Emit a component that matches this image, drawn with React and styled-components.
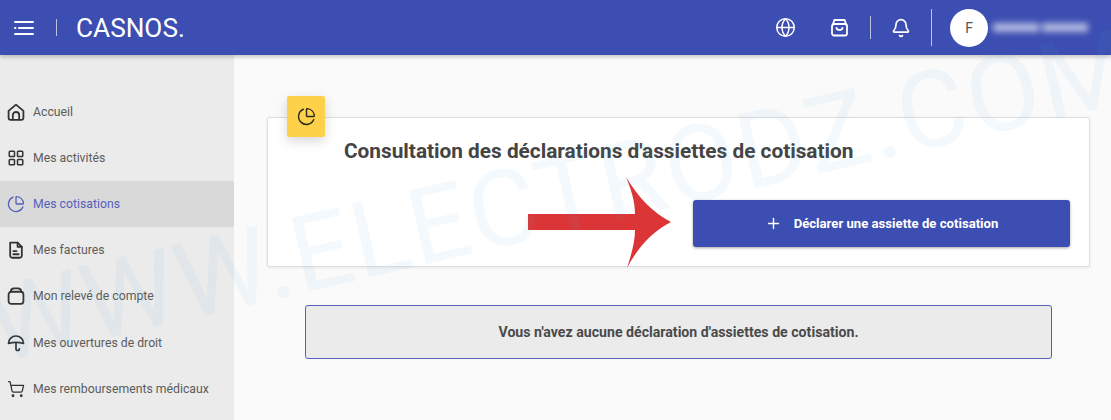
import React from "react";
import styled, { createGlobalStyle } from "styled-components";
import { ChartPie, Bell, Globe, LayoutGrid, Plus, ShoppingCart } from "lucide-react";

const GlobalStyle = createGlobalStyle`
  html, body { margin: 0; padding: 0; height: 100%; overflow: hidden; }
  body { font-family: Roboto, "Liberation Sans", sans-serif; background: #fafafa; }
  * { box-sizing: border-box; }
`;

const Page = styled.div`
  position: relative;
  height: 100vh;
  display: flex;
  flex-direction: column;
  overflow: hidden;
`;

const Header = styled.header`
  height: 55px;
  flex: none;
  display: flex;
  align-items: center;
  background: #3c4eb1;
  color: #fff;
  box-shadow: 0 2px 4px rgba(0, 0, 0, 0.22);
  position: relative;
  z-index: 1;
`;

const MenuButton = styled.div`
  width: 56px;
  display: flex;
  justify-content: center;
  padding-right: 8px;
`;

const Rule = styled.span`
  width: 1px;
  height: ${(p) => p.$h}px;
  background: rgba(255, 255, 255, 0.65);
  flex: none;
`;

const Brand = styled.div`
  margin-left: 19px;
  font-size: 26.2px;
  flex: 1;
`;

const HeaderIcon = styled.div`
  display: flex;
  width: ${(p) => p.$w}px;
  justify-content: center;
`;

const Avatar = styled.div`
  width: 38px;
  height: 38px;
  border-radius: 50%;
  background: #fff;
  color: #555;
  font-size: 14px;
  display: flex;
  align-items: center;
  justify-content: center;
  margin-left: 18px;
`;

const BlurredName = styled.div`
  display: flex;
  gap: 3px;
  margin-left: 5px;
  margin-right: 23px;
  filter: blur(3px);
`;

const NameBar = styled.span`
  width: ${(p) => p.$w}px;
  height: 9px;
  background: rgba(255, 255, 255, 0.6);
`;

const Body = styled.div`
  flex: 1;
  display: flex;
  min-height: 0;
`;

const Sidebar = styled.nav`
  width: 234px;
  flex: none;
  background: #ebebeb;
  padding-top: 33.5px;
`;

const NavItem = styled.div`
  height: 46.2px;
  display: flex;
  align-items: center;
  gap: 8px;
  padding-left: 7px;
  font-size: 12.25px;
  color: ${(p) => (p.$active ? "#5361b9" : "#5b5b5b")};
  background: ${(p) => (p.$active ? "#d9d9d9" : "transparent")};

  svg {
    color: ${(p) => (p.$active ? "#5361b9" : "#333")};
    flex: none;
  }
`;

const Main = styled.main`
  flex: 1;
  padding: 62px 21px 0 33px;
`;

const Card = styled.section`
  position: relative;
  height: 150px;
  background: #fff;
  border: 1px solid #dedede;
  border-radius: 2px;
  box-shadow: 0 1px 3px rgba(0, 0, 0, 0.08);
  padding: 21px 19px 0 76px;
  display: flex;
  flex-direction: column;
`;

const Badge = styled.div`
  position: absolute;
  left: 19px;
  top: -22px;
  width: 38px;
  height: 41px;
  background: #fdd14a;
  border-radius: 2px;
  box-shadow: 0 4px 12px rgba(0, 0, 0, 0.16);
  display: flex;
  align-items: center;
  justify-content: center;
  color: #2e2a1c;
`;

const Title = styled.h1`
  margin: 0;
  font-size: 20.8px;
  line-height: 24px;
  font-weight: 700;
  color: #444;
`;

const ActionButton = styled.button`
  align-self: flex-end;
  margin-top: 37px;
  width: 377px;
  height: 47px;
  border: 0;
  border-radius: 3px;
  background: #3c4eb1;
  color: #fff;
  box-shadow: 0 1px 3px rgba(0, 0, 0, 0.35);
  font-family: inherit;
  font-size: 13.15px;
  font-weight: 700;
  display: flex;
  align-items: center;
  justify-content: center;
  gap: 12px;
`;

const EmptyNotice = styled.div`
  margin: 38px 38px 0;
  height: 54px;
  background: #ebebeb;
  border: 1px solid #5361b9;
  border-radius: 3px;
  display: flex;
  align-items: center;
  justify-content: center;
  font-size: 14.15px;
  font-weight: 700;
  color: #4a4a4a;
`;

const Arrow = styled.svg`
  position: absolute;
  left: 528px;
  top: 177px;
  z-index: 2;
`;

const Watermark = styled.div`
  position: absolute;
  left: -2px;
  top: 274px;
  font-family: Roboto, sans-serif;
  font-size: 106px;
  line-height: 1;
  letter-spacing: 1.6px;
  white-space: nowrap;
  color: rgba(90, 170, 215, 0.07);
  transform: rotate(-13deg);
  transform-origin: 0 89px;
  pointer-events: none;
  z-index: 3;
`;

const stroke = { fill: "none", stroke: "currentColor", strokeLinecap: "round", strokeLinejoin: "round" };

const MenuIcon = () => (
  <svg width="22" height="16" viewBox="0 0 22 16" {...stroke} strokeWidth="2">
    <path d="M2 2h18M6 8h14M2 14h18M2 8h.5" />
  </svg>
);

const BasketIcon = () => (
  <svg width="19" height="19" viewBox="0 0 19 19" {...stroke} strokeWidth="1.8">
    <path d="M3 6.500 4.300 2h10.400L16 6.500" />
    <rect x="2" y="6" width="15" height="11.500" rx="2" />
    <path d="M6.500 10c.6 2.600 5.400 2.600 6 0" />
  </svg>
);

const HomeIcon = () => (
  <svg width="18" height="18" viewBox="0 0 17 17" {...stroke} strokeWidth="1.7">
    <path d="M1.500 7.500 8.500 1.500l7 6v6.500a2 2 0 0 1-2 2h-10a2 2 0 0 1-2-2z" />
    <path d="M5.500 15.500v-4a3 3 0 0 1 6 0v4" />
  </svg>
);

const FileIcon = () => (
  <svg width="18" height="18" viewBox="0 0 17 17" {...stroke} strokeWidth="1.7">
    <path d="M3 1.500h7l4 4v8.500a1.800 1.800 0 0 1-1.800 1.800H4.800A1.800 1.800 0 0 1 3 14z" />
    <path d="M10 1.500v4h4M6 9.500h3M6 12.500h5" />
  </svg>
);

const JarIcon = () => (
  <svg width="18" height="18" viewBox="0 0 17 17" {...stroke} strokeWidth="1.7">
    <rect x="1.500" y="4.500" width="14" height="11.500" rx="2.500" />
    <path d="M3.500 4.500c.2-2 1.300-3.200 3-3.200h4c1.700 0 2.800 1.200 3 3.200" />
  </svg>
);

const UmbrellaIcon = () => (
  <svg width="18" height="18" viewBox="0 0 18 18" {...stroke} strokeWidth="1.7">
    <path d="M1.500 9.500a7.500 7.500 0 0 1 15 0c-4-1.200-11-1.200-15 0z" />
    <path d="M9 9v5.800a1.700 1.700 0 0 0 3.400 0" />
  </svg>
);

const navItems = [
  { label: "Accueil", icon: <HomeIcon /> },
  { label: "Mes activités", icon: <LayoutGrid size={18} strokeWidth={2} /> },
  { label: "Mes cotisations", icon: <ChartPie size={18} strokeWidth={1.7} />, active: true },
  { label: "Mes factures", icon: <FileIcon /> },
  { label: "Mon relevé de compte", icon: <JarIcon /> },
  { label: "Mes ouvertures de droit", icon: <UmbrellaIcon /> },
  { label: "Mes remboursements médicaux", icon: <ShoppingCart size={18} strokeWidth={1.7} /> },
];

export default function App() {
  return (
    <Page>
      <GlobalStyle />
      <Header>
        <MenuButton>
          <MenuIcon />
        </MenuButton>
        <Rule $h={17} />
        <Brand>CASNOS.</Brand>
        <HeaderIcon $w={45}>
          <Globe size={21} strokeWidth={1.7} />
        </HeaderIcon>
        <HeaderIcon $w={62}>
          <BasketIcon />
        </HeaderIcon>
        <Rule $h={23} />
        <HeaderIcon $w={60}>
          <Bell size={20} strokeWidth={2} />
        </HeaderIcon>
        <Rule $h={37} />
        <Avatar>F</Avatar>
        <BlurredName>
          <NameBar $w={46} />
          <NameBar $w={46} />
        </BlurredName>
      </Header>
      <Body>
        <Sidebar>
          {navItems.map((item) => (
            <NavItem key={item.label} $active={item.active}>
              {item.icon}
              {item.label}
            </NavItem>
          ))}
        </Sidebar>
        <Main>
          <Card>
            <Badge>
              <ChartPie size={19} strokeWidth={1.8} />
            </Badge>
            <Title>Consultation des déclarations d'assiettes de cotisation</Title>
            <ActionButton>
              <Plus size={17} strokeWidth={2} />
              Déclarer une assiette de cotisation
            </ActionButton>
          </Card>
          <EmptyNotice>Vous n'avez aucune déclaration d'assiettes de cotisation.</EmptyNotice>
        </Main>
      </Body>
      <Arrow width="143" height="92" viewBox="0 0 143 92">
        <path
          fill="#dc3537"
          d="M0 37H107C107 24 103 12 98 0C110 20 125 36 143 45C125 54 110 70 99 91C103 78 107 66 107 53H0Z"
        />
      </Arrow>
      <Watermark>WWW.ELECTRODZ.COM</Watermark>
    </Page>
  );
}
